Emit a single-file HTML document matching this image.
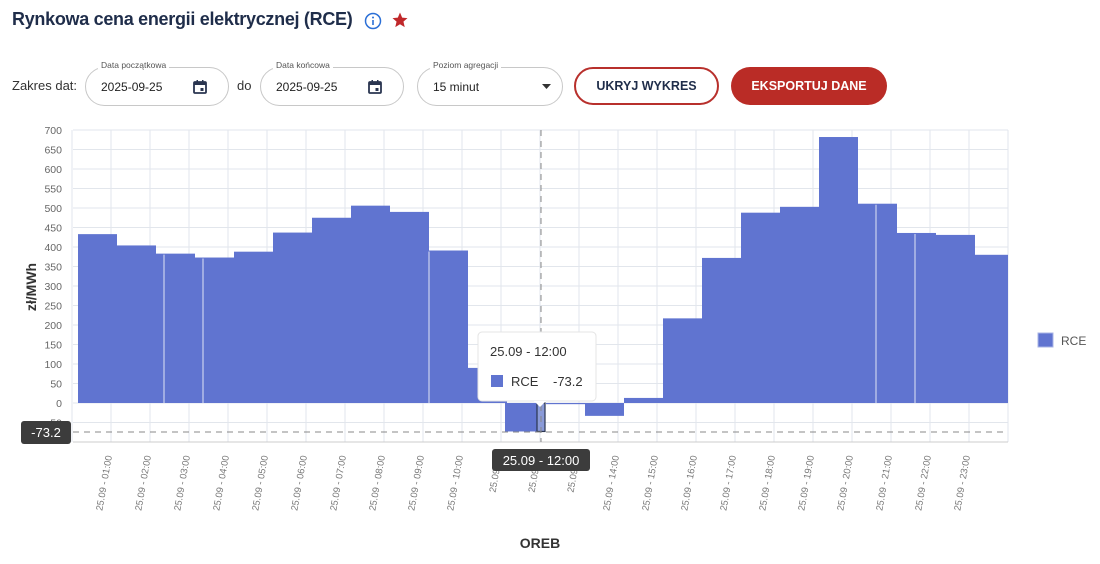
<!DOCTYPE html>
<html><head><meta charset="utf-8"><style>
*{box-sizing:border-box;margin:0;padding:0}
body{width:1100px;height:564px;background:#fff;font-family:"Liberation Sans",sans-serif;position:relative;overflow:hidden;color:#1f2d4a}
.abs{position:absolute}
.title{left:12px;top:9px;font-size:18px;font-weight:bold;color:#1f2d4a;letter-spacing:-0.3px}
.inp{border:1px solid #c8c8c8;border-radius:20px;height:39px;top:67px}
.lbl{position:absolute;top:-8px;left:12px;background:#fff;padding:0 3px;font-size:8.5px;color:#555}
.val{position:absolute;left:15px;top:12px;font-size:12px;color:#222}
.btn{top:67px;height:38px;border-radius:20px;font-size:12.5px;font-weight:bold;text-align:center;line-height:34px}
</style></head><body>
<div class="abs title">Rynkowa cena energii elektrycznej (RCE)</div>
<svg class="abs" style="left:363px;top:11px" width="20" height="20" viewBox="0 0 20 20"><circle cx="10" cy="10" r="7.5" fill="none" stroke="#2b6fd6" stroke-width="1.5"/><rect x="9.2" y="9" width="1.6" height="5" fill="#2b6fd6"/><circle cx="10" cy="6.5" r="1" fill="#2b6fd6"/></svg>
<svg class="abs" style="left:391px;top:11px" width="18" height="18" viewBox="0 0 24 24"><path d="M12 2l2.9 6.9 7.1.6-5.4 4.7 1.7 7.3L12 17.6 5.7 21.5l1.7-7.3L2 9.5l7.1-.6z" fill="#c0282a"/></svg>
<div class="abs" style="left:12px;top:78px;font-size:13px;color:#333">Zakres dat:</div>
<div class="abs inp" style="left:85px;width:144px"><span class="lbl">Data początkowa</span><span class="val">2025-09-25</span>
<svg class="abs" style="left:106px;top:11px" width="16" height="16" viewBox="0 0 16 16"><rect x="2" y="3" width="12" height="11" rx="1" fill="none" stroke="#2a3550" stroke-width="1.8"/><rect x="2" y="3" width="12" height="3" fill="#2a3550"/><rect x="4.5" y="1" width="1.5" height="3" fill="#2a3550"/><rect x="10" y="1" width="1.5" height="3" fill="#2a3550"/><rect x="8.5" y="9" width="3" height="3" fill="#2a3550"/></svg></div>
<div class="abs" style="left:237px;top:78px;font-size:13px;color:#333">do</div>
<div class="abs inp" style="left:260px;width:144px"><span class="lbl">Data końcowa</span><span class="val">2025-09-25</span>
<svg class="abs" style="left:106px;top:11px" width="16" height="16" viewBox="0 0 16 16"><rect x="2" y="3" width="12" height="11" rx="1" fill="none" stroke="#2a3550" stroke-width="1.8"/><rect x="2" y="3" width="12" height="3" fill="#2a3550"/><rect x="4.5" y="1" width="1.5" height="3" fill="#2a3550"/><rect x="10" y="1" width="1.5" height="3" fill="#2a3550"/><rect x="8.5" y="9" width="3" height="3" fill="#2a3550"/></svg></div>
<div class="abs inp" style="left:417px;width:146px"><span class="lbl">Poziom agregacji</span><span class="val">15 minut</span>
<svg class="abs" style="left:124px;top:16px" width="9" height="6"><path d="M0 0h9L4.5 5z" fill="#333"/></svg></div>
<div class="abs btn" style="left:574px;width:145px;border:2px solid #b8302c;color:#1f2d4a">UKRYJ WYKRES</div>
<div class="abs btn" style="left:731px;width:156px;background:#ba2c26;color:#fff;line-height:38px">EKSPORTUJ DANE</div>

<svg class="abs" style="left:0;top:0" width="1100" height="564" font-family="Liberation Sans, sans-serif">
<g stroke="#e2e6ec" stroke-width="1" id="grid"></g>
<g id="bars"></g>
<g id="labels" font-size="10.5" fill="#666"></g>
<g id="xl" font-size="9.5" fill="#777"></g>
<line x1="73" y1="442" x2="1008" y2="442" stroke="#ccc"/>
<line x1="73" y1="432" x2="1008" y2="432" stroke="#888" stroke-dasharray="6,5"/>
<line x1="541" y1="130" x2="541" y2="442" stroke="#888" stroke-dasharray="6,5"/>
<text transform="translate(36,287) rotate(-90)" text-anchor="middle" font-size="14" font-weight="bold" fill="#333">zł/MWh</text>
<text x="540" y="548" text-anchor="middle" font-size="14" font-weight="bold" fill="#333">OREB</text>
<rect x="21" y="421" width="50" height="23" rx="3" fill="#3c3c3c"/>
<text x="46" y="437" text-anchor="middle" font-size="13" fill="#fff">-73.2</text>
<rect x="492" y="449" width="98" height="22" rx="3" fill="#3c3c3c"/>
<text x="541" y="465" text-anchor="middle" font-size="13" fill="#fff">25.09 - 12:00</text>
<rect x="478" y="332" width="118" height="69" rx="4" fill="#fff" stroke="#e4e4e4"/>
<path d="M534 401l6 6 6-6z" fill="#fff"/>
<text x="490" y="356" font-size="13" fill="#333">25.09 - 12:00</text>
<rect x="491" y="375" width="12" height="12" fill="#6074d0"/>
<text x="511" y="386" font-size="13" fill="#333">RCE</text>
<text x="553" y="386" font-size="13" fill="#333">-73.2</text>
<rect x="1038" y="333" width="15" height="14" fill="#6074d0" stroke="#a8b4e6"/>
<text x="1061" y="345" font-size="12" fill="#555">RCE</text>
</svg>
<script>
var g=document.getElementById('grid'),b=document.getElementById('bars'),l=document.getElementById('labels'),xl=document.getElementById('xl'),ns='http://www.w3.org/2000/svg';
function el(p,t,a){var e=document.createElementNS(ns,t);for(var k in a)e.setAttribute(k,a[k]);p.appendChild(e);return e;}
var Y=function(v){return 403-v*0.39;};
for(var v=-100;v<=700;v+=50){el(g,'line',{x1:73,x2:1008,y1:Y(v),y2:Y(v)});if(v>-100){var t=el(l,'text',{x:62,y:Y(v)+4,'text-anchor':'end'});t.textContent=v;}}
for(var h=0;h<=24;h++){el(g,'line',{x1:72+h*39,x2:72+h*39,y1:130,y2:442});}
var vals=[433,404,383,373,388,437,475,506,490,391,90,-73,-3,-33,13,217,372,488,503,682,511,436,431,380];
for(h=0;h<24;h++){var x=78+h*39,w=(h==23)?1008-x:39,v=vals[h],y=v>=0?Y(v):403,hh=Math.abs(v*0.39);
 if(h==11){el(b,'rect',{x:x-2,y:403,width:32,height:hh,fill:'#6074d0'});el(b,'rect',{x:537,y:403,width:8,height:hh,fill:'#8a9ad8',stroke:'#2a3550','stroke-width':1.2});continue;}
 el(b,'rect',{x:x,y:y,width:w,height:hh,fill:'#6074d0'});}
[164,203,429,876,915].forEach(function(s){el(b,'line',{x1:s,x2:s,y1:Y(vals[Math.floor((s-78)/39)])+1,y2:403,stroke:'#dfe4f5'});});
for(h=1;h<24;h++){var x=72+h*39+1,t=el(xl,'text',{transform:'translate('+x+',456) rotate(-80)','text-anchor':'end'});t.textContent=(h>=11&&h<=13)?'25.09 - 1':'25.09 - '+(h<10?'0':'')+h+':00';}
</script>
</body></html>
